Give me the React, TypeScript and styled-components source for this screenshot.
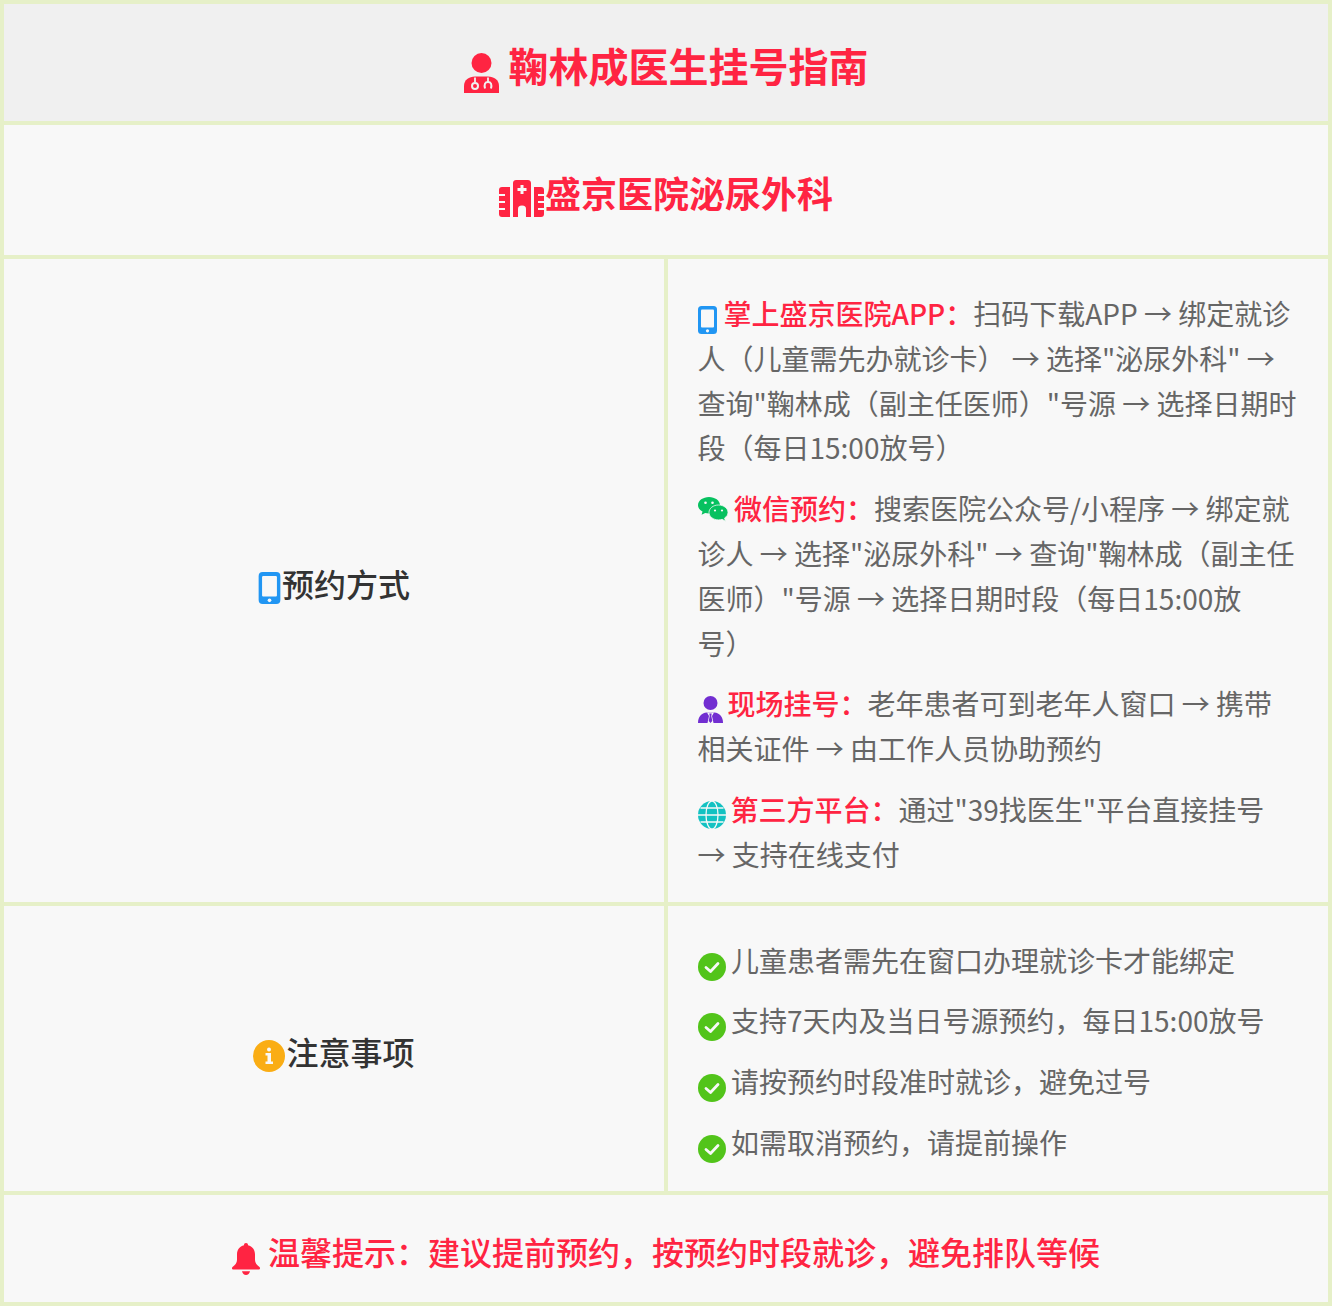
import React from "react";
import styled, { createGlobalStyle } from "styled-components";

const Global = createGlobalStyle`
  html, body { margin: 0; padding: 0; background: #fff; }
  body { font-family: "Noto Sans CJK SC", "Noto Sans", sans-serif; }
`;

const Board = styled.div`
  display: grid;
  grid-template-columns: 660px 660px;
  gap: 4px;
  padding: 4px;
  width: 1332px;
  box-sizing: border-box;
  background: #e6f0c8;
`;

const Banner = styled.div<{ $shade?: boolean; $h: number; $size: number; $pad: number }>`
  grid-column: 1 / -1;
  display: flex;
  align-items: center;
  justify-content: center;
  box-sizing: border-box;
  height: ${(p) => p.$h}px;
  padding-top: ${(p) => p.$pad}px;
  background: ${(p) => (p.$shade ? "#f0f0f0" : "#f8f8f8")};
  color: #ff2442;
  font-size: ${(p) => p.$size}px;
  font-weight: 700;
`;

const FootBanner = styled(Banner)`
  font-weight: 500;
`;

const Label = styled.div<{ $pad: number }>`
  display: flex;
  align-items: center;
  justify-content: center;
  padding-top: ${(p) => p.$pad}px;
  background: #f8f8f8;
  color: #333;
  font-size: 32px;
  font-weight: 500;
`;

const Body = styled.div<{ $top: number; $bottom: number }>`
  background: #f8f8f8;
  padding: ${(p) => p.$top}px 30px ${(p) => p.$bottom}px 29.5px;
  color: #666;
  font-size: 28px;
  line-height: 44.8px;
`;

const Para = styled.p`
  margin: 0 0 16px;
  &:last-child { margin-bottom: 0; }
`;

const Lead = styled.span`
  color: #ff2442;
  font-weight: 500;
`;

const Glyph = styled.svg<{ $gap: number; $drop: number; $nudge: number }>`
  display: inline-block;
  flex: none;
  margin-top: ${(p) => p.$nudge}px;
  margin-right: ${(p) => p.$gap}px;
  vertical-align: ${(p) => -p.$drop}px;
`;

type IconProps = { w: number; h: number; gap?: number; drop?: number; nudge?: number };

const Doctor = ({ w, h, gap = 0, drop = 0, nudge = 0 }: IconProps) => (
  <Glyph $gap={gap} $drop={drop} $nudge={nudge} width={w} height={h} viewBox="0 0 35 40">
    <circle cx="17.500" cy="10" r="10" fill="#ff2442" />
    <path d="M0 40V33C0 27 5 23.500 11 23.500H24C30 23.500 35 27 35 33V40Z" fill="#ff2442" />
    <path d="M11 24.500V29M24 24.500V29" stroke="#f0f0f0" strokeWidth="1.800" />
    <circle cx="11" cy="33" r="3" fill="none" stroke="#f0f0f0" strokeWidth="2" />
    <path d="M21 35.500C20 31 21 29 24 29C27 29 28 31 27 35.500" fill="none" stroke="#f0f0f0" strokeWidth="2" />
  </Glyph>
);

const Hospital = ({ w, h, gap = 0, drop = 0, nudge = 0 }: IconProps) => (
  <Glyph $gap={gap} $drop={drop} $nudge={nudge} width={w} height={h} viewBox="0 0 45 37">
    <path fill="#ff2442" d="M14 3C14 1 15.500 0 17 0H29C30.500 0 32 1 32 3V37H27V29C27 27 26 25.500 23 25.500C20 25.500 19 27 19 29V37H14Z" />
    <path fill="#f8f8f8" d="M21.500 5H24.500V8H27.500V11H24.500V14H21.500V11H18.500V8H21.500Z" />
    <path fill="#ff2442" d="M11 7V37H3C1 37 0 36 0 34V10C0 8 1 7 3 7Z" />
    <path fill="#ff2442" d="M35 7V37H42C44 37 45 36 45 34V10C45 8 44 7 42 7Z" />
    <path stroke="#f8f8f8" strokeWidth="2" d="M0 15H6M0 22H6M0 29H6M39 15H45M39 22H45M39 29H45" />
  </Glyph>
);

const Phone = ({ w, h, gap = 0, drop = 0, nudge = 0 }: IconProps) => (
  <Glyph $gap={gap} $drop={drop} $nudge={nudge} width={w} height={h} viewBox="0 0 19 28">
    <rect width="19" height="28" rx="3.500" fill="#2196f3" />
    <rect x="3" y="3.500" width="13" height="18" rx="1" fill="#f8f8f8" />
    <circle cx="9.500" cy="24.800" r="1.600" fill="#f8f8f8" />
  </Glyph>
);

const Wechat = ({ w, h, gap = 0, drop = 0, nudge = 0 }: IconProps) => (
  <Glyph $gap={gap} $drop={drop} $nudge={nudge} width={w} height={h} viewBox="0 0 30 25">
    <path fill="#07c160" d="M11 0C17 0 22 3.600 22 8.200C22 12.800 17 16.400 11 16.400C9.600 16.400 8.400 16.200 7.200 15.900L3.600 17.800L4.500 14.600C1.800 13.100 0 10.800 0 8.200C0 3.600 5 0 11 0Z" />
    <path fill="#07c160" stroke="#f8f8f8" strokeWidth="0.800" d="M20.500 8C25.700 8 30 11.300 30 15.400C30 17.700 28.700 19.700 26.600 21L27.400 24.200L24.200 22.300C23 22.700 21.800 22.900 20.500 22.900C15.300 22.900 11 19.500 11 15.400C11 11.300 15.300 8 20.500 8Z" />
    <circle cx="7.500" cy="5.800" r="1.300" fill="#f8f8f8" />
    <circle cx="14.500" cy="5.800" r="1.300" fill="#f8f8f8" />
    <circle cx="17" cy="13.500" r="1.100" fill="#f8f8f8" />
    <circle cx="24" cy="13.500" r="1.100" fill="#f8f8f8" />
  </Glyph>
);

const Agent = ({ w, h, gap = 0, drop = 0, nudge = 0 }: IconProps) => (
  <Glyph $gap={gap} $drop={drop} $nudge={nudge} width={w} height={h} viewBox="0 0 25 27">
    <circle cx="12.500" cy="7" r="7" fill="#722ed1" />
    <path fill="#722ed1" d="M0 27C0 21 3 17 9 16.500H16C22 17 25 21 25 27Z" />
    <path fill="#f8f8f8" d="M9 16.500H16L14 20L15.500 27H9.500L11 20Z" />
    <path fill="#722ed1" d="M11.300 17.500H13.700L13.300 20L14.300 25L12.500 27L10.700 25L11.700 20Z" />
  </Glyph>
);

const Globe = ({ w, h, gap = 0, drop = 0, nudge = 0 }: IconProps) => (
  <Glyph $gap={gap} $drop={drop} $nudge={nudge} width={w} height={h} viewBox="0 0 28 28">
    <circle cx="14" cy="14" r="14" fill="#13c2c2" />
    <g fill="none" stroke="#f8f8f8" strokeWidth="1.300">
      <ellipse cx="14" cy="14" rx="6" ry="14" />
      <path d="M0 14H28M2.500 7H25.500M2.500 21H25.500" />
    </g>
  </Glyph>
);

const InfoDot = ({ w, h, gap = 0, drop = 0, nudge = 0 }: IconProps) => (
  <Glyph $gap={gap} $drop={drop} $nudge={nudge} width={w} height={h} viewBox="0 0 32 32">
    <circle cx="16" cy="16" r="16" fill="#faad14" />
    <circle cx="16" cy="9.500" r="2" fill="#f8f8f8" />
    <path fill="#f8f8f8" d="M12.500 13H18V21.500H20V24H12.500V21.500H14.500V15.500H12.500Z" />
  </Glyph>
);

const Check = ({ w, h, gap = 0, drop = 0, nudge = 0 }: IconProps) => (
  <Glyph $gap={gap} $drop={drop} $nudge={nudge} width={w} height={h} viewBox="0 0 28 28">
    <circle cx="14" cy="14" r="14" fill="#52c41a" />
    <path d="M8 14.500L12.500 18.500L20 10.500" fill="none" stroke="#f8f8f8" strokeWidth="2.800" strokeLinecap="round" strokeLinejoin="round" />
  </Glyph>
);

const Bell = ({ w, h, gap = 0, drop = 0, nudge = 0 }: IconProps) => (
  <Glyph $gap={gap} $drop={drop} $nudge={nudge} width={w} height={h} viewBox="0 0 28 32">
    <path fill="#ff2442" d="M14 0C15.300 0 16 .8 16 2.200C20.500 3.200 23 6.800 23 11.500V17C23 20 25 22 27.500 24C28.500 25 28 26.500 26.500 26.500H1.500C0 26.500 -.5 25 .5 24C3 22 5 20 5 17V11.500C5 6.800 7.500 3.200 12 2.200C12 .8 12.700 0 14 0Z" />
    <path fill="#ff2442" d="M10 28.200H18C17.500 30.500 16 32 14 32C12 32 10.500 30.500 10 28.200Z" />
  </Glyph>
);

const checks = [
  "儿童患者需先在窗口办理就诊卡才能绑定",
  "支持7天内及当日号源预约，每日15:00放号",
  "请按预约时段准时就诊，避免过号",
  "如需取消预约，请提前操作",
];

export default function App() {
  return (
    <>
      <Global />
      <Board>
        <Banner $shade $h={117} $size={40} $pad={4}>
          <Doctor w={35} h={40} gap={10} nudge={16} />
          <span>鞠林成医生挂号指南</span>
        </Banner>
        <Banner $h={130} $size={36} $pad={4}>
          <Hospital w={45} h={37} gap={1} nudge={12} />
          <span>盛京医院泌尿外科</span>
        </Banner>
        <Label $pad={5}>
          <Phone w={23} h={32} gap={1} nudge={10} />
          <span>预约方式</span>
        </Label>
        <Body $top={32} $bottom={25}>
          <Para>
            <Phone w={19} h={28} gap={7} drop={9} />
            <Lead>掌上盛京医院APP：</Lead>
            扫码下载APP → 绑定就诊人（儿童需先办就诊卡） → 选择"泌尿外科" → 查询"鞠林成（副主任医师）"号源 → 选择日期时段（每日15:00放号）
          </Para>
          <Para>
            <Wechat w={30} h={25} gap={6.5} drop={2} />
            <Lead>微信预约：</Lead>
            搜索医院公众号/小程序 → 绑定就诊人 → 选择"泌尿外科" → 查询"鞠林成（副主任医师）"号源 → 选择日期时段（每日15:00放
            <br />
            号）
          </Para>
          <Para>
            <Agent w={25} h={27} gap={5} drop={8} />
            <Lead>现场挂号：</Lead>
            老年患者可到老年人窗口 → 携带相关证件 → 由工作人员协助预约
          </Para>
          <Para>
            <Globe w={28} h={28} gap={5} drop={8} />
            <Lead>第三方平台：</Lead>
            通过"39找医生"平台直接挂号 → 支持在线支付
          </Para>
        </Body>
        <Label $pad={6}>
          <InfoDot w={32} h={32} gap={1} nudge={10} />
          <span>注意事项</span>
        </Label>
        <Body $top={32} $bottom={26}>
          {checks.map((c) => (
            <Para key={c}>
              <Check w={28} h={28} gap={5.5} drop={9} />
              {c}
            </Para>
          ))}
        </Body>
        <FootBanner $h={107} $size={32} $pad={6}>
          <Bell w={28} h={32} gap={8} nudge={16} />
          <span>温馨提示：建议提前预约，按预约时段就诊，避免排队等候</span>
        </FootBanner>
      </Board>
    </>
  );
}
